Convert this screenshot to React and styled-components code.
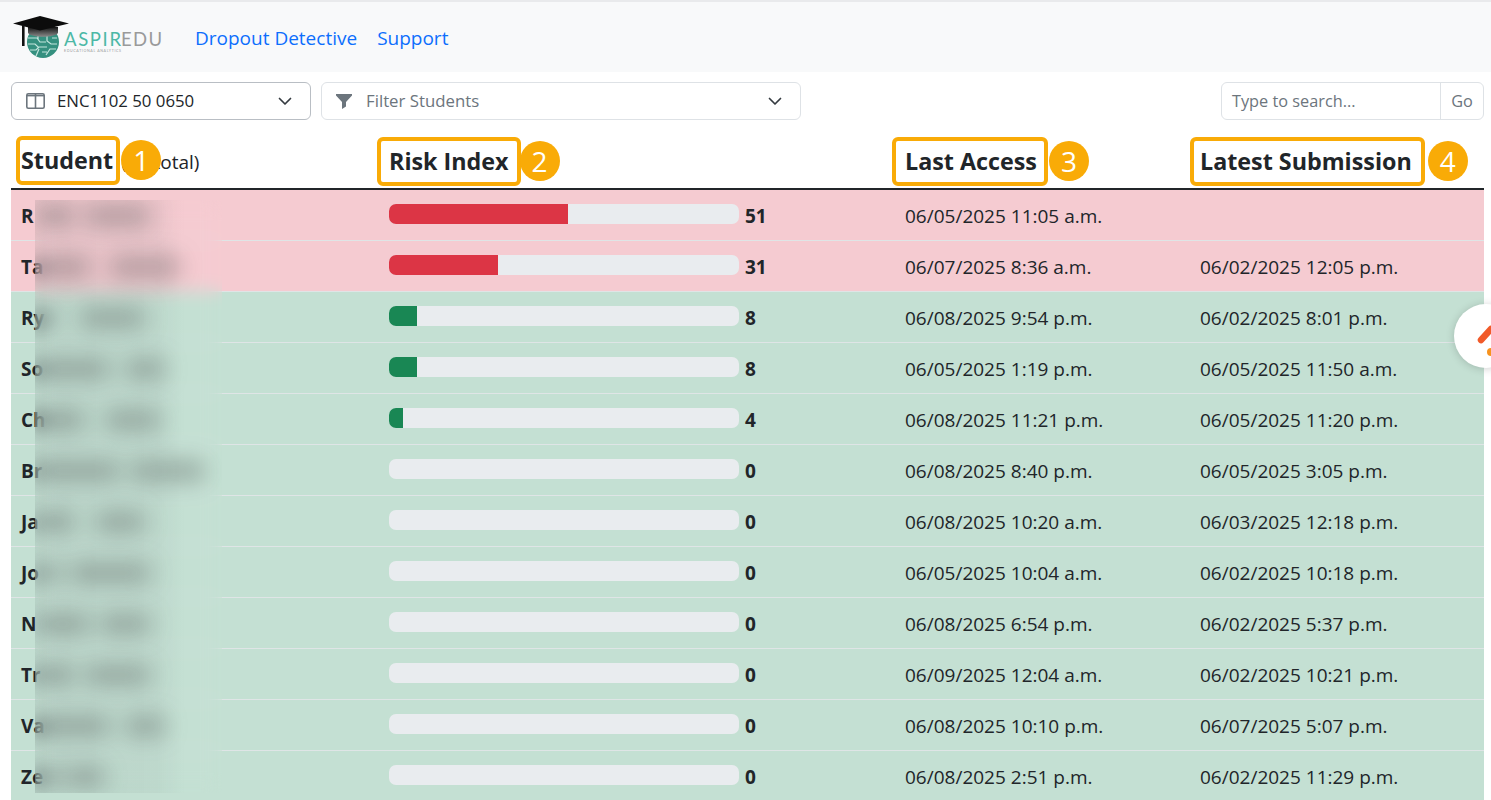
import React from 'react';
import styled, { createGlobalStyle } from 'styled-components';

const colors = {
  text: '#212529',
  muted: '#6c757d',
  link: '#0d6efd',
  amber: '#f9ab07',
  danger: '#dc3545',
  success: '#198754',
  dangerRow: '#f5cbd1',
  successRow: '#c4e0d3',
  rowLine: '#dfe5e6',
  track: '#e9ecef',
};

const GlobalStyle = createGlobalStyle`
  html, body {
    margin: 0;
    height: 100%;
    overflow: hidden;
    background: #fff;
  }
  body {
    font-family: "Open Sans", "Noto Sans", sans-serif;
    font-size: 19px;
    color: ${colors.text};
  }
`;

const Page = styled.div`
  position: relative;
  width: 1491px;
`;

// Top navigation
const NavBar = styled.nav`
  height: 70px;
  background: #f8f9fa;
  border-top: 2px solid #e9eaec;
  display: flex;
  align-items: center;
  padding-left: 13px;
`;

const NavLink = styled.a`
  font-size: 19px;
  line-height: 28px;
  color: ${colors.link};
  text-decoration: none;
  margin-top: 2px;
  margin-left: ${(p) => p.$gap}px;
`;

// Course / filter / search row
const Toolbar = styled.div`
  display: flex;
  gap: 10px;
  padding: 10px 7px 0 11px;
`;

const Select = styled.div`
  box-sizing: border-box;
  width: ${(p) => p.$width}px;
  height: 38px;
  background: #fff;
  border: 1px solid ${(p) => (p.$strong ? '#b9bec4' : '#dee2e6')};
  border-radius: 6px;
  display: flex;
  align-items: center;
  padding: 0 18px 0 14px;
  color: ${(p) => (p.$strong ? colors.text : colors.muted)};
  font-size: 16.8px;
`;

const SelectLabel = styled.span`
  flex: 1;
  margin-left: ${(p) => p.$gap}px;
  margin-bottom: 2px;
`;

const SearchGroup = styled.div`
  box-sizing: border-box;
  margin-left: auto;
  width: 263px;
  height: 38px;
  border: 1px solid #dee2e6;
  border-radius: 6px;
  display: flex;
  font-size: 16.3px;
  color: ${colors.muted};
`;

const SearchInput = styled.div`
  flex: 1;
  display: flex;
  align-items: center;
  padding-left: 10px;
`;

const GoButton = styled.div`
  width: 42px;
  border-left: 1px solid #dee2e6;
  display: flex;
  align-items: center;
  justify-content: center;
`;

// Student table
const Table = styled.div`
  position: relative;
  margin: 16px 7px 0 11px;
`;

const Row = styled.div`
  display: grid;
  grid-template-columns: 368px 516px 295px 1fr;
  align-items: center;
  box-sizing: border-box;
`;

const HeadRow = styled(Row)`
  height: 54px;
  border-bottom: 2px solid ${colors.text};
`;

const BodyRow = styled(Row)`
  height: 51px;
  background: ${(p) => (p.$risk ? colors.dangerRow : colors.successRow)};
  border-bottom: 1px solid ${colors.rowLine};
`;

const Cell = styled.div`
  padding: 2px 0 0 10px;
  white-space: nowrap;
`;

const HeadCell = styled(Cell)`
  padding-top: 0;
  font-size: 23.3px;
  font-weight: 700;
  line-height: 30px;
  margin-top: -2px;
`;

const HeadLabel = styled.span`
  position: relative;
  display: inline-block;
`;

const Total = styled.span`
  font-size: 19px;
  font-weight: 400;
  margin-left: 8px;
`;

// Tutorial annotation drawn over the header labels
const CalloutFrame = styled.span`
  position: absolute;
  top: -9px;
  bottom: -10px;
  left: ${(p) => p.$left}px;
  right: ${(p) => p.$right}px;
  border: 4px solid ${colors.amber};
  border-radius: 6px;
`;

const CalloutBadge = styled.span`
  position: absolute;
  top: 50%;
  left: calc(100% + ${(p) => p.$gap}px);
  width: 40px;
  height: 40px;
  margin-top: -20px;
  border-radius: 50%;
  background: ${colors.amber};
  color: #fff;
  font-family: "Open Sans", sans-serif;
  font-size: 28px;
  font-weight: 400;
  line-height: 40px;
  text-align: center;
  z-index: 2;
`;

const StudentName = styled.strong`
  font-weight: 700;
`;

const RiskCell = styled(Cell)`
  display: flex;
  align-items: center;
  gap: 6px;
`;

const Track = styled.div`
  width: 350px;
  height: 20px;
  margin-top: -4px;
  background: ${colors.track};
  border-radius: 7px;
  overflow: hidden;
`;

const Fill = styled.div`
  height: 100%;
  background: ${(p) => (p.$risk ? colors.danger : colors.success)};
`;

const Score = styled.strong`
  font-weight: 700;
`;

// Redaction patch over the student names
const Redaction = styled.div`
  position: absolute;
  left: 24px;
  top: 64px;
  width: 187px;
  height: 593px;
  overflow: hidden;
  backdrop-filter: blur(9px);
  background: linear-gradient(90deg, rgba(70, 80, 80, 0.07) 0%, rgba(70, 80, 80, 0.05) 65%, rgba(70, 80, 80, 0) 80%);
  z-index: 1;
`;

const RedactedLines = styled.div`
  margin-top: -10px;
`;

const RedactedLine = styled.div`
  height: 51px;
  display: flex;
  align-items: center;
  filter: blur(11px);
`;

const Smudge = styled.span`
  height: 22px;
  width: ${(p) => p.$width}px;
  margin-left: ${(p) => p.$gap}px;
  background: rgba(80, 85, 85, 0.36);
  border-radius: 8px;
  flex: none;
`;

const HelpBubble = styled.div`
  position: fixed;
  left: 1454px;
  top: 304px;
  width: 64px;
  height: 64px;
  border-radius: 50%;
  background: #fff;
  box-shadow: 0 1px 8px rgba(0, 0, 0, 0.18);
  z-index: 3;
`;

const HelpMark = styled.svg`
  display: block;
  width: 64px;
  height: 64px;
`;

const Logo = () => (
  <svg width="152" height="46" viewBox="13 12 152 46" aria-label="AspirEdu">
    <defs>
      <linearGradient id="skull" x1="0" y1="0" x2="0" y2="1">
        <stop offset="0%" stopColor="#111" />
        <stop offset="100%" stopColor="#8a8a8a" />
      </linearGradient>
    </defs>
    <circle cx="43" cy="40" r="16" fill="#35907f" />
    <path
      d="M28 36h9l3 4h6M28 42h7l3 3h9M30 48h6l3-3M36 54l3-7M47 32v7l4 3h6M46 53l4-6h6M38 32v5M52 36h5M42 50h5"
      fill="none"
      stroke="#c4e6de"
      strokeWidth="1.2"
    />
    <path d="M28 25h30v6c-4 5-26 5-30 0z" fill="url(#skull)" />
    <path d="M13 21.5 40 14l29 7.5-29 7z" fill="#0c0c0c" />
    <path d="M22 23h2.6V44H22z" fill="#111" />
    <text x="64" y="44" fontFamily="Lato, sans-serif" fontWeight="400" fontSize="18.5" fill="#4cb8a6" textLength="57">
      ASPIR
    </text>
    <text x="121" y="44" fontFamily="Lato, sans-serif" fontWeight="400" fontSize="18.5" fill="#9a9a9a" textLength="41">
      EDU
    </text>
    <text x="64" y="49.5" fontFamily="Lato, sans-serif" fontSize="3.6" fill="#9a9a9a" textLength="57">
      EDUCATIONAL ANALYTICS
    </text>
  </svg>
);

const ColumnsIcon = () => (
  <svg width="19" height="16" viewBox="0 0 19 16" fill="none" stroke="#6c757d" strokeWidth="1.6">
    <rect x="0.8" y="0.8" width="17.4" height="14.4" rx="1.5" />
    <path d="M9.5 1v14" />
    <path d="M1 2.6h17" />
  </svg>
);

const FunnelIcon = () => (
  <svg width="16" height="15" viewBox="0 0 16 15" fill="#6c757d">
    <path d="M0 0h16v1.6L10 8v4.6L6 15V8L0 1.6z" />
  </svg>
);

const Chevron = () => (
  <svg width="14" height="14" viewBox="0 0 14 14" fill="none" stroke="#343a40" strokeWidth="1.7" strokeLinecap="round" strokeLinejoin="round">
    <path d="M1.5 4.5 7 10l5.500-5.500" />
  </svg>
);

const columns = [
  { title: 'Student', left: -5, right: -7, gap: 8, total: '(12 total)' },
  { title: 'Risk Index', left: -12, right: -12, gap: 6 },
  { title: 'Last Access', left: -13, right: -11, gap: 8 },
  { title: 'Latest Submission', left: -10, right: -13, gap: 10 },
];

const students = [
  { name: 'R', score: 51, width: 51, access: '06/05/2025 11:05 a.m.', submitted: '', risk: true, smudges: [[40, 0], [65, 10]] },
  { name: 'Ta', score: 31, width: 31, access: '06/07/2025 8:36 a.m.', submitted: '06/02/2025 12:05 p.m.', risk: true, smudges: [[55, 0], [70, 20]] },
  { name: 'Ry', score: 8, width: 8, access: '06/08/2025 9:54 p.m.', submitted: '06/02/2025 8:01 p.m.', smudges: [[20, 0], [65, 25]] },
  { name: 'So', score: 8, width: 8, access: '06/05/2025 1:19 p.m.', submitted: '06/05/2025 11:50 a.m.', smudges: [[75, 0], [40, 15]] },
  { name: 'Ch', score: 4, width: 4, access: '06/08/2025 11:21 p.m.', submitted: '06/05/2025 11:20 p.m.', smudges: [[50, 0], [55, 20]] },
  { name: 'Br', score: 0, width: 0, access: '06/08/2025 8:40 p.m.', submitted: '06/05/2025 3:05 p.m.', smudges: [[85, 0], [75, 10]] },
  { name: 'Ja', score: 0, width: 0, access: '06/08/2025 10:20 a.m.', submitted: '06/03/2025 12:18 p.m.', smudges: [[40, 0], [50, 20]] },
  { name: 'Jo', score: 0, width: 0, access: '06/05/2025 10:04 a.m.', submitted: '06/02/2025 10:18 p.m.', smudges: [[25, 0], [80, 10]] },
  { name: 'N', score: 0, width: 0, access: '06/08/2025 6:54 p.m.', submitted: '06/02/2025 5:37 p.m.', smudges: [[55, 0], [50, 10]] },
  { name: 'Tr', score: 0, width: 0, access: '06/09/2025 12:04 a.m.', submitted: '06/02/2025 10:21 p.m.', smudges: [[40, 0], [65, 10]] },
  { name: 'Va', score: 0, width: 0, access: '06/08/2025 10:10 p.m.', submitted: '06/07/2025 5:07 p.m.', smudges: [[75, 0], [40, 15]] },
  { name: 'Ze', score: 0, width: 0, access: '06/08/2025 2:51 p.m.', submitted: '06/02/2025 11:29 p.m.', smudges: [[25, 0], [40, 5]] },
];

const App = () => (
  <Page>
    <GlobalStyle />
    <NavBar>
      <Logo />
      <NavLink href="#" $gap={30}>Dropout Detective</NavLink>
      <NavLink href="#" $gap={20}>Support</NavLink>
    </NavBar>

    <Toolbar>
      <Select $width={300} $strong>
        <ColumnsIcon />
        <SelectLabel $gap={12}>ENC1102 50 0650</SelectLabel>
        <Chevron />
      </Select>
      <Select $width={480}>
        <FunnelIcon />
        <SelectLabel $gap={14}>Filter Students</SelectLabel>
        <Chevron />
      </Select>
      <SearchGroup>
        <SearchInput>Type to search...</SearchInput>
        <GoButton>Go</GoButton>
      </SearchGroup>
    </Toolbar>

    <Table>
      <HeadRow>
        {columns.map((col, index) => (
          <HeadCell key={col.title}>
            <HeadLabel>
              {col.title}
              <CalloutFrame $left={col.left} $right={col.right} />
              <CalloutBadge $gap={-col.right + col.gap - 7}>{index + 1}</CalloutBadge>
            </HeadLabel>
            {col.total && <Total>{col.total}</Total>}
          </HeadCell>
        ))}
      </HeadRow>

      {students.map((s) => (
        <BodyRow key={s.access} $risk={s.risk}>
          <Cell><StudentName>{s.name}</StudentName></Cell>
          <RiskCell>
            <Track>
              <Fill $risk={s.risk} style={{ width: `${s.width}%` }} />
            </Track>
            <Score>{s.score}</Score>
          </RiskCell>
          <Cell>{s.access}</Cell>
          <Cell>{s.submitted}</Cell>
        </BodyRow>
      ))}

      <Redaction aria-hidden="true">
        <RedactedLines>
          {students.map((s) => (
            <RedactedLine key={s.access}>
              {s.smudges.map(([width, gap], i) => (
                <Smudge key={i} $width={width} $gap={gap} />
              ))}
            </RedactedLine>
          ))}
        </RedactedLines>
      </Redaction>
    </Table>

    <HelpBubble>
      <HelpMark viewBox="0 0 64 64">
        <path d="M27 36 37 25" stroke="#f15a29" strokeWidth="6.500" strokeLinecap="round" fill="none" />
        <circle cx="37" cy="48" r="4" fill="#f7931e" />
      </HelpMark>
    </HelpBubble>
  </Page>
);

export default App;
